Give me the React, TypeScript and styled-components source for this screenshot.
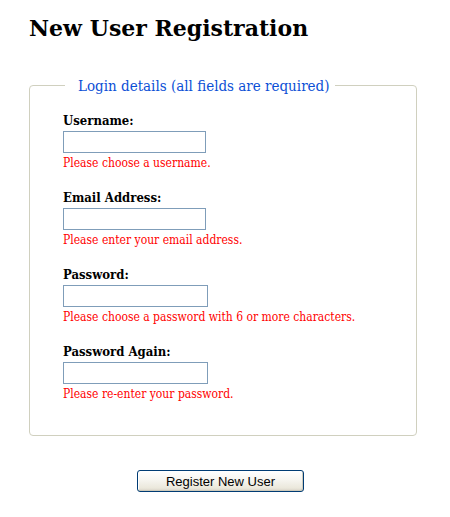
import React from 'react';
import styled, { createGlobalStyle } from 'styled-components';

const GlobalStyle = createGlobalStyle`
  body {
    margin: 0;
    background: #fff;
    font-family: "DejaVu Serif", serif;
  }
`;

interface Field {
  id: string;
  label: string;
  type: string;
  error: string;
  wide?: boolean;
}

const fields: Field[] = [
  { id: 'username', label: 'Username:', type: 'text', error: 'Please choose a username.' },
  { id: 'email', label: 'Email Address:', type: 'text', error: 'Please enter your email address.' },
  { id: 'password', label: 'Password:', type: 'password', error: 'Please choose a password with 6 or more characters.', wide: true },
  { id: 'password2', label: 'Password Again:', type: 'password', error: 'Please re-enter your password.', wide: true },
];

export default function App() {
  return (
    <Page>
      <GlobalStyle />
      <Heading>New User Registration</Heading>
      <form onSubmit={e => e.preventDefault()}>
        <Fieldset>
          <Legend>Login details (all fields are required)</Legend>
          <FieldList>
            {fields.map(f => (
              <Row key={f.id}>
                <Label htmlFor={f.id}>{f.label}</Label>
                <Input id={f.id} type={f.type} $wide={f.wide} />
                <Error>{f.error}</Error>
              </Row>
            ))}
          </FieldList>
        </Fieldset>
        <ButtonBar>
          <Button type="submit">Register New User</Button>
        </ButtonBar>
      </form>
    </Page>
  );
}

const Page = styled.div`
  width: 388px;
  padding: 15px 0 0 29px;
`;

const Heading = styled.h1`
  margin: 0;
  font-family: "DejaVu Serif", serif;
  font-size: 22px;
  line-height: 26px;
  font-weight: bold;
  color: #000;
`;

const Fieldset = styled.fieldset`
  margin: 34px 0 0 0;
  padding: 16px 0 33px 33px;
  border: 1px solid #d0d0bf;
  border-radius: 4px;
  min-width: 0;
`;

const Legend = styled.legend`
  margin-left: 2px;
  padding: 2px 6px 0 13px;
  font-family: "DejaVu Serif Condensed", "DejaVu Serif", serif;
  font-stretch: condensed;
  font-size: 15px;
  line-height: 19px;
  color: #0b4fd6;
`;

const FieldList = styled.div`
  display: flex;
  flex-direction: column;
  gap: 18px;
`;

const Row = styled.div`
  display: flex;
  flex-direction: column;
  align-items: flex-start;
`;

const Label = styled.label`
  display: block;
  margin-bottom: 2px;
  font-family: "DejaVu Serif Condensed", "DejaVu Serif", serif;
  font-stretch: condensed;
  font-size: 13px;
  line-height: 17px;
  font-weight: bold;
  color: #000;
`;

const Input = styled.input<{ $wide?: boolean }>`
  box-sizing: border-box;
  width: ${props => (props.$wide ? '145px' : '143px')};
  height: 22px;
  margin: 0;
  padding: 2px 3px;
  border: 1px solid #7f9db9;
  background: #fff;
  outline: none;
`;

const Error = styled.span`
  display: block;
  margin-top: 2px;
  font-family: "DejaVu Serif Condensed", "DejaVu Serif", serif;
  font-stretch: condensed;
  font-size: 12px;
  line-height: 16px;
  color: #f00;
`;

const ButtonBar = styled.div`
  display: flex;
  justify-content: center;
  padding: 34px 5px 0 0;
`;

const Button = styled.button`
  box-sizing: border-box;
  width: 167px;
  height: 22px;
  padding: 0;
  border: 1px solid #003c74;
  border-radius: 3px;
  background: linear-gradient(to bottom, #ffffff 0%, #f6f5f0 45%, #ebe8dc 85%, #d8d2c6 100%);
  box-shadow: inset -1px -1px 0 #cdcabb, inset 1px 1px 0 #ffffff;
  font-family: "Liberation Sans", Arial, sans-serif;
  font-size: 13px;
  color: #000;
  cursor: pointer;
`;
